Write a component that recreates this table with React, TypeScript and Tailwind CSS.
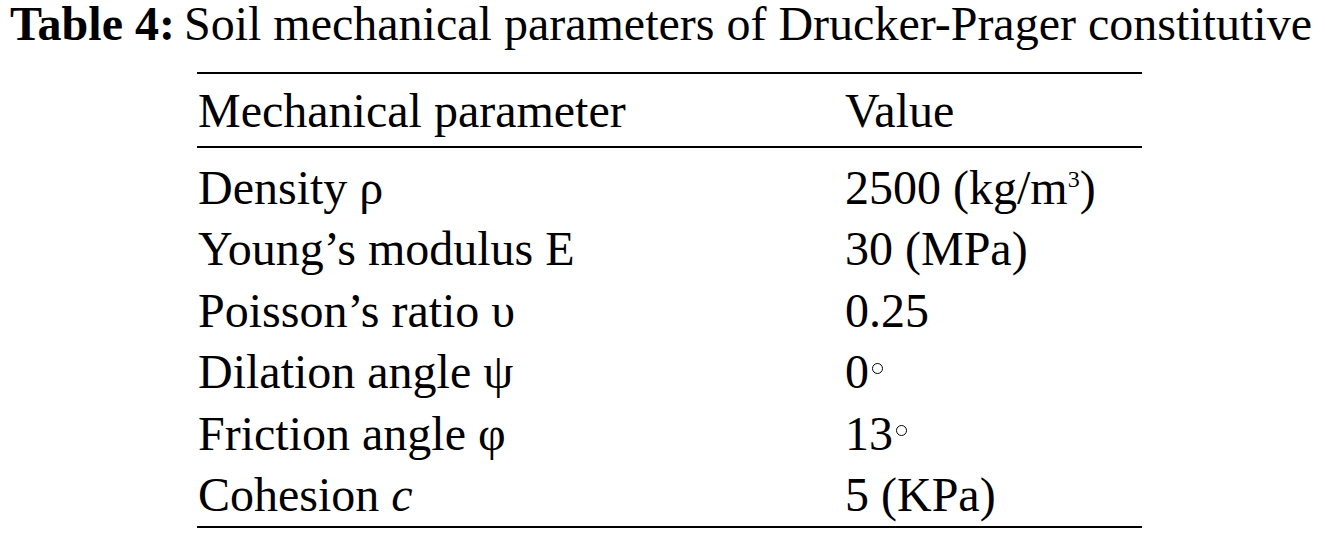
import React from "react";

const Deg = () => (
  <span className="relative -top-[14px] ml-[3px] inline-block w-[11px] h-[11px] rounded-full border-[1.5px] border-black align-baseline" />
);

const rows: { p: React.ReactNode; v: React.ReactNode }[] = [
  { p: <>Density ρ</>, v: <>2500 (kg/m<span className="relative -top-[17px] text-[24px] leading-none">3</span>)</> },
  { p: <>Young’s modulus E</>, v: <>30 (MPa)</> },
  { p: <>Poisson’s ratio υ</>, v: <>0.25</> },
  { p: <>Dilation angle ψ</>, v: <>0<Deg /></> },
  { p: <>Friction angle φ</>, v: <>13<Deg /></> },
  { p: <>Cohesion <i>c</i></>, v: <>5 (KPa)</> },
];

export default function App() {
  return (
    <div
      className="w-[1325px] h-[533px] bg-white text-black overflow-hidden text-[48px]"
      style={{ fontFamily: '"Liberation Serif", "Times New Roman", serif' }}
    >
      <div className="flex h-[47px] leading-[47px] pl-[10px] whitespace-nowrap">
        <span className="font-bold w-[174px]">Table 4:</span>
        <span>Soil mechanical parameters of Drucker-Prager constitutive</span>
      </div>
      <div className="ml-[197px] w-[945px] mt-[25px] border-t-2 border-b-2 border-black">
        <div className="flex h-[74px] leading-[74px] border-b-2 border-black whitespace-nowrap">
          <div className="w-[648px] pl-[1px]">Mechanical parameter</div>
          <div>Value</div>
        </div>
        <div className="pt-[9px] pb-[1px]">
          {rows.map((r, i) => (
            <div key={i} className="flex h-[61.4px] leading-[61.4px] whitespace-nowrap">
              <div className="w-[648px] h-[61.4px] pl-[1px]">{r.p}</div>
              <div className="h-[61.4px]">{r.v}</div>
            </div>
          ))}
        </div>
      </div>
    </div>
  );
}
